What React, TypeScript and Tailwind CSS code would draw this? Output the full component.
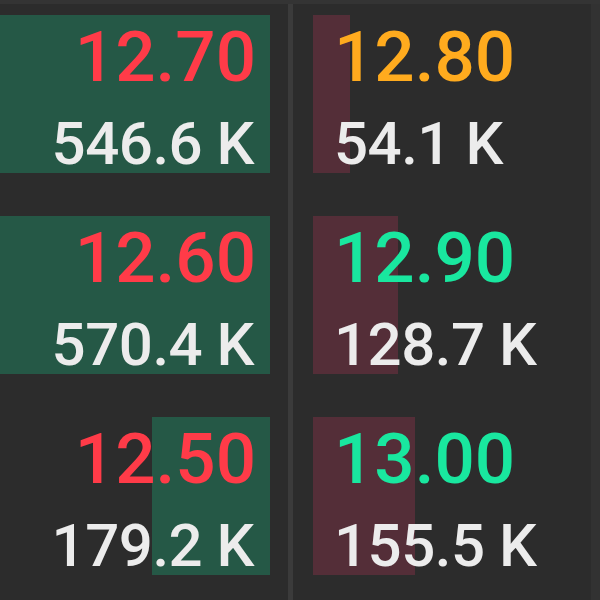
import React from "react";

type Row = { price: string; vol: string; color: string; bar: number };

const left: Row[] = [
  { price: "12.70", vol: "546.6 K", color: "text-[#ff3b48]", bar: 270 },
  { price: "12.60", vol: "570.4 K", color: "text-[#ff3b48]", bar: 270 },
  { price: "12.50", vol: "179.2 K", color: "text-[#ff3b48]", bar: 118 },
];

const right: Row[] = [
  { price: "12.80", vol: "54.1 K", color: "text-[#ffab1e]", bar: 37 },
  { price: "12.90", vol: "128.7 K", color: "text-[#19e79f]", bar: 85 },
  { price: "13.00", vol: "155.5 K", color: "text-[#19e79f]", bar: 102 },
];

const font = { fontFamily: "Roboto, 'Liberation Sans', sans-serif" };

export default function App() {
  return (
    <div
      className="w-[600px] h-[600px] bg-[#2c2c2c] flex flex-col overflow-hidden font-medium"
      style={font}
    >
      <div className="h-[4px] bg-[#343434]" />
      <div className="flex flex-1">
        <div className="w-[288px] flex flex-col pt-[11px] gap-[43px] pr-[18px]">
          {left.map((r) => (
            <div key={r.price} className="relative h-[158px]">
              <div
                className="absolute right-0 top-0 bottom-0 bg-[#255846]"
                style={{ width: r.bar }}
              />
              <div className="relative flex flex-col items-end pt-[6px] pr-[14px]">
                <div className={`text-[71px] leading-[72px] ${r.color}`}>{r.price}</div>
                <div className="text-[60px] leading-[60px] mt-[21px] text-[#ececec] pr-[2px] tracking-[-0.5px]">
                  {r.vol}
                </div>
              </div>
            </div>
          ))}
        </div>
        <div className="w-[5px] bg-[#3b3b3b]" />
        <div className="flex-1 flex flex-col pt-[11px] gap-[43px] pl-[20px]">
          {right.map((r) => (
            <div key={r.price} className="relative h-[158px]">
              <div
                className="absolute left-0 top-0 bottom-0 bg-[#542e38]"
                style={{ width: r.bar }}
              />
              <div className="relative flex flex-col items-start pt-[6px] pl-[21px]">
                <div className={`text-[71px] leading-[72px] ${r.color}`}>{r.price}</div>
                <div className="text-[60px] leading-[60px] mt-[21px] text-[#ececec] tracking-[-0.5px]">
                  {r.vol}
                </div>
              </div>
            </div>
          ))}
        </div>
        <div className="w-[9px] bg-[#323232]" />
      </div>
    </div>
  );
}
